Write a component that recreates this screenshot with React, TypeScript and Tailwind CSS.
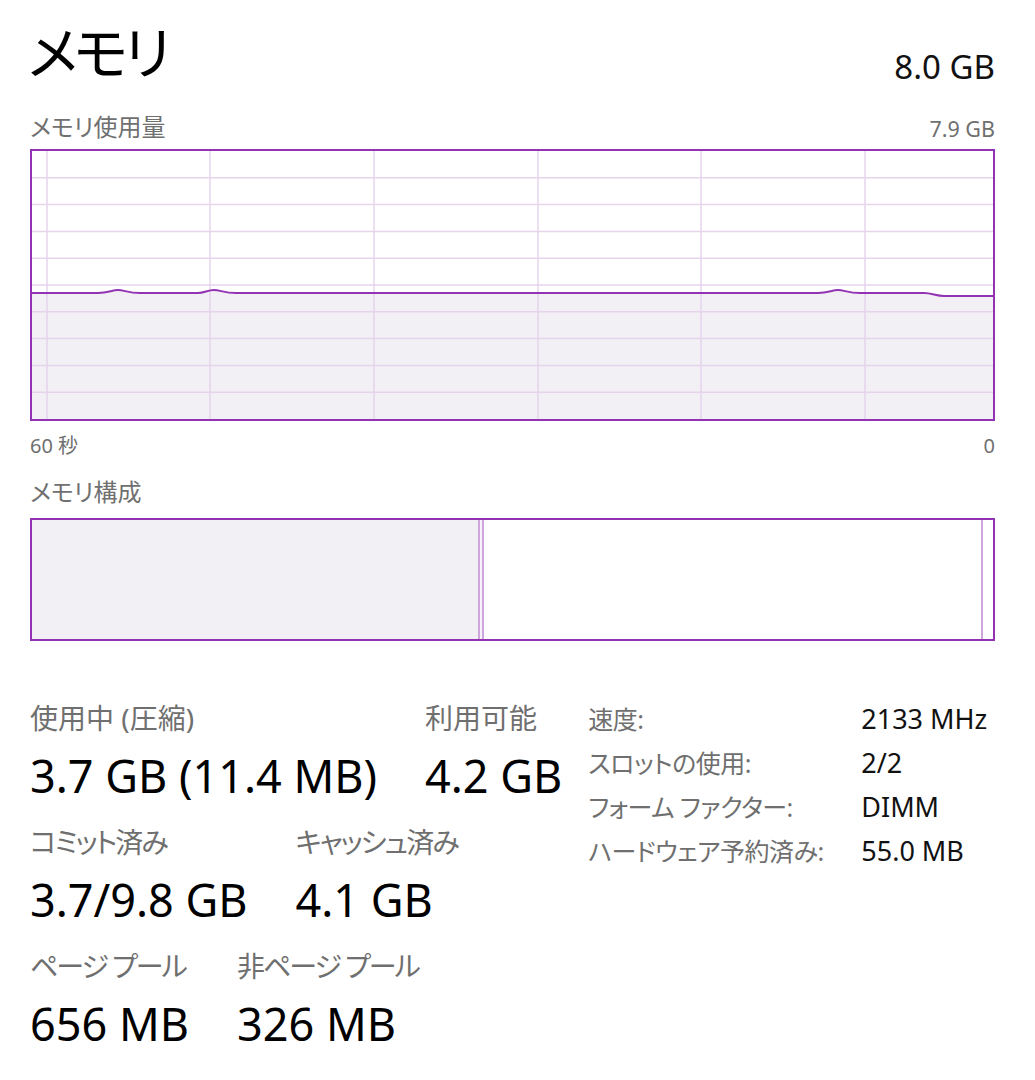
import React from "react";

const font = "font-['Noto_Sans','Noto_Sans_CJK_JP',sans-serif] [font-feature-settings:'palt']";

// memory usage graph, inner area 961 x 268
function UsageChart() {
  const w = 961;
  const h = 268;
  const cols = [15, 178, 342, 506, 669, 833];
  const rows = Array.from({ length: 9 }, (_, i) => ((i + 1) * h) / 10);
  const line =
    "M0 142 L66 142 C76 142 80 139 86 139 C92 139 96 142 108 142 L166 142 C172 142 176 139 182 139 C188 139 192 142 204 142 L786 142 C796 142 800 139 806 139 C812 139 816 142 828 142 L892 142 C900 142 904 145 912 145 L961 145";
  return (
    <svg width={w} height={h} viewBox={`0 0 ${w} ${h}`} className="block">
      <path d={`${line} L961 ${h} L0 ${h} Z`} fill="#f2f0f4" />
      {rows.map((y) => (
        <line key={y} x1={0} x2={w} y1={y} y2={y} stroke="#e6d4ec" strokeWidth={1.5} />
      ))}
      {cols.map((x) => (
        <line key={x} x1={x} x2={x} y1={0} y2={h} stroke="#e6d4ec" strokeWidth={1.5} />
      ))}
      <path d={line} fill="none" stroke="#9233b4" strokeWidth={2} />
    </svg>
  );
}

function Stat({ label, value, tight }: { label: string; value: string; tight?: boolean }) {
  return (
    <div className="flex flex-col">
      <span className={`text-[28px] leading-[54px] text-[#6f6f6f] ${tight ? "tracking-[-2px]" : ""}`}>
        {label}
      </span>
      <span className="text-[45px] leading-[62px] text-black">{value}</span>
    </div>
  );
}

const specs = [
  ["速度:", "2133 MHz"],
  ["スロットの使用:", "2/2"],
  ["フォーム ファクター:", "DIMM"],
  ["ハードウェア予約済み:", "55.0 MB"],
];

export default function App() {
  return (
    <div className={`${font} w-[1035px] h-[1080px] bg-white pl-[30px] pr-[40px] pt-[14px]`}>
      {/* header */}
      <div className="flex items-end justify-between">
        <h1 className="text-[57px] leading-[80px] tracking-[-4px] text-black font-normal -ml-[2px] -mt-[2px]">
          メモリ
        </h1>
        <span className="text-[33px] leading-[50px] text-[#111]">8.0 GB</span>
      </div>

      <div className="flex items-end justify-between mt-[18px] text-[#707070]">
        <span className="text-[24px] leading-[34px]">メモリ使用量</span>
        <span className="text-[21.5px] leading-[30px]">7.9 GB</span>
      </div>

      <div className="mt-[5px] border-2 border-[#9233b4] w-[965px] h-[272px]">
        <UsageChart />
      </div>

      <div className="flex justify-between text-[20px] leading-[34px] text-[#707070] mt-[8px]">
        <span>60 秒</span>
        <span>0</span>
      </div>

      <div className="text-[24px] leading-[34px] text-[#707070] mt-[12px]">メモリ構成</div>

      {/* composition bar */}
      <div className="mt-[9px] flex border-2 border-[#9233b4] w-[965px] h-[123px]">
        <div className="w-[448px] bg-[#f2f0f4] border-r-2 border-[#cfa6dc]" />
        <div className="w-[4px] bg-[#f7f1f9] border-r-2 border-[#cfa6dc]" />
        <div className="flex-1 border-r-2 border-[#cfa6dc]" />
        <div className="w-[10px]" />
      </div>

      {/* stats */}
      <div className="flex mt-[50px]">
        <div className="flex flex-col gap-[8px]">
          <div className="flex gap-[48px]">
            <Stat label="使用中 (圧縮)" value="3.7 GB (11.4 MB)" />
            <Stat label="利用可能" value="4.2 GB" />
          </div>
          <div className="flex gap-[48px]">
            <Stat label="コミット済み" value="3.7/9.8 GB" tight />
            <Stat label="キャッシュ済み" value="4.1 GB" tight />
          </div>
          <div className="flex gap-[48px]">
            <Stat label="ページ プール" value="656 MB" tight />
            <Stat label="非ページ プール" value="326 MB" tight />
          </div>
        </div>

        <div className="ml-[26px] grid grid-cols-[273px_auto] auto-rows-[44px] mt-[6px] h-fit">
          {specs.map(([k, v]) => (
            <React.Fragment key={k}>
              <span className="text-[25px] leading-[44px] tracking-[-0.5px] text-[#6f6f6f]">{k}</span>
              <span className="text-[27px] leading-[44px] text-[#111]">{v}</span>
            </React.Fragment>
          ))}
        </div>
      </div>
    </div>
  );
}
